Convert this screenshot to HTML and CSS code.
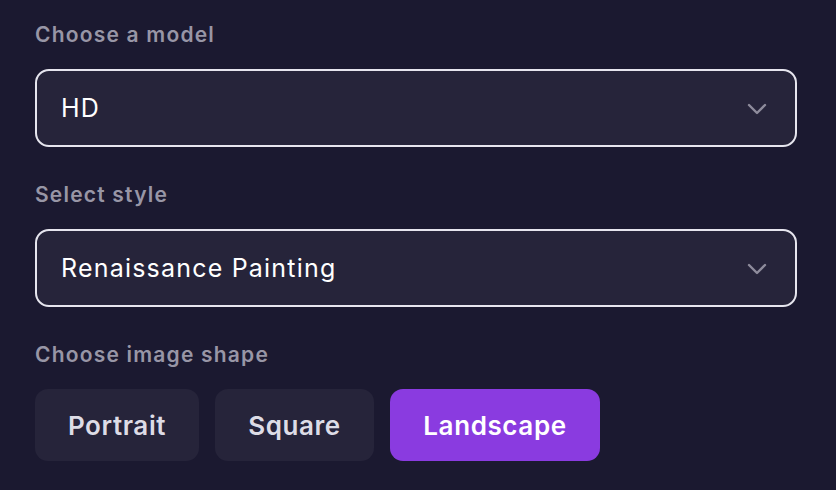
FILE: index.html
```html
<!DOCTYPE html>
<html lang="en">
<head>
    <meta charset="UTF-8">
    <meta name="viewport" content="width=device-width, initial-scale=1.0">
    <title>Image Settings</title>
    <link rel="stylesheet" href="styles.css">
</head>
<body>

    <div class="settings">
        <div class="field">
            <div class="field-label">Choose a model</div>
            <div class="select-box">
                <span>HD</span>
                <svg class="chevron" width="20" height="12" viewBox="0 0 20 12"><path d="M2 2 L10 10 L18 2" fill="none" stroke="#8e8c9c" stroke-width="2.4" stroke-linecap="round" stroke-linejoin="round"/></svg>
            </div>
        </div>

        <div class="field">
            <div class="field-label">Select style</div>
            <div class="select-box">
                <span>Renaissance Painting</span>
                <svg class="chevron" width="20" height="12" viewBox="0 0 20 12"><path d="M2 2 L10 10 L18 2" fill="none" stroke="#8e8c9c" stroke-width="2.4" stroke-linecap="round" stroke-linejoin="round"/></svg>
            </div>
        </div>

        <div class="field">
            <div class="field-label">Choose image shape</div>
            <div class="shapes">
                <button class="shape portrait">Portrait</button>
                <button class="shape square">Square</button>
                <button class="shape landscape active">Landscape</button>
            </div>
        </div>
    </div>

</body>
</html>
```

FILE: styles.css
```css
body {
    margin: 0;
    font-family: Inter, "Noto Sans", sans-serif;
    background-color: #1b1930;
}

.settings {
    width: 762px;
    padding: 23px 35px 0;
}

.field {
    margin-bottom: 36px;
}

.field-label {
    font-size: 21px;
    line-height: 24px;
    font-weight: 600;
    letter-spacing: 1.2px;
    color: #9896a6;
    margin-bottom: 22px;
}

.select-box {
    display: flex;
    align-items: center;
    justify-content: space-between;
    height: 74px;
    padding: 0 28px 0 24px;
    border: 2px solid #e6e5ee;
    border-radius: 14px;
    background-color: #26243a;
    color: #ffffff;
    font-size: 25px;
    letter-spacing: 1.2px;
}

.chevron {
    margin-top: 2px;
}

.shapes {
    display: flex;
    gap: 16px;
}

.shape {
    height: 72px;
    padding: 0;
    border: none;
    border-radius: 13px;
    background-color: #26243a;
    color: #dddce6;
    font-family: Inter, "Noto Sans", sans-serif;
    font-size: 26px;
    font-weight: 600;
    letter-spacing: 0.6px;
    cursor: pointer;
}

.portrait {
    width: 164px;
}

.square {
    width: 159px;
}

.landscape {
    width: 210px;
}

.shape.active {
    background-color: #8a3be0;
    color: #ffffff;
}
```
